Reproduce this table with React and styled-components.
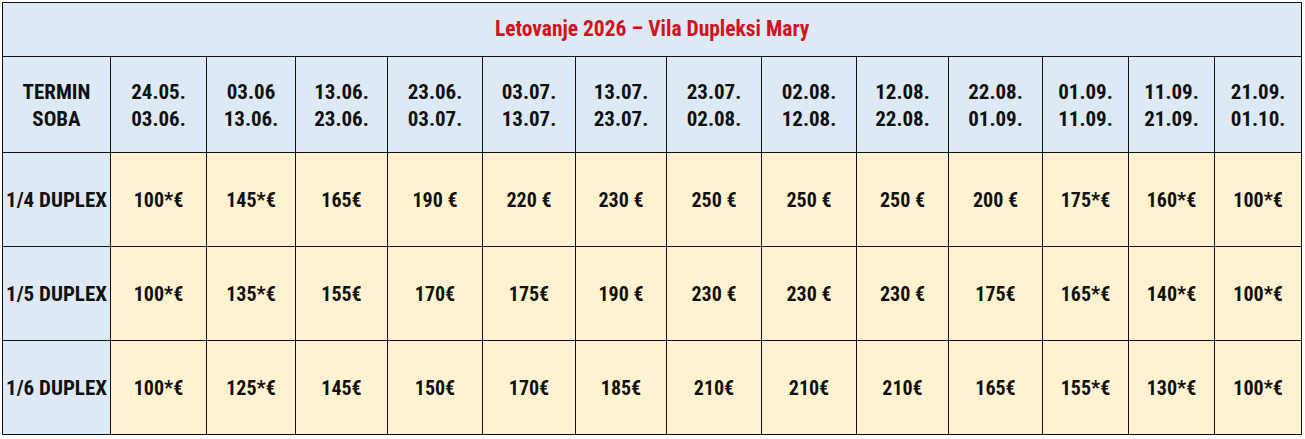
import styled, { createGlobalStyle } from 'styled-components';

const GlobalStyle = createGlobalStyle`
  html, body {
    margin: 0;
    padding: 0;
    background: #ffffff;
  }
  body {
    font-family: Roboto, "Open Sans", sans-serif;
    font-stretch: 75%;
  }
`;

const columns = [108, 96, 89, 92, 95, 93, 91, 95, 95, 92, 94, 86, 86, 87];

const terms = [
  ['24.05.', '03.06.'],
  ['03.06', '13.06.'],
  ['13.06.', '23.06.'],
  ['23.06.', '03.07.'],
  ['03.07.', '13.07.'],
  ['13.07.', '23.07.'],
  ['23.07.', '02.08.'],
  ['02.08.', '12.08.'],
  ['12.08.', '22.08.'],
  ['22.08.', '01.09.'],
  ['01.09.', '11.09.'],
  ['11.09.', '21.09.'],
  ['21.09.', '01.10.'],
];

const rooms = [
  {
    name: '1/4 DUPLEX',
    height: 94,
    prices: ['100*€', '145*€', '165€', '190 €', '220 €', '230 €', '250 €', '250 €', '250 €', '200 €', '175*€', '160*€', '100*€'],
  },
  {
    name: '1/5 DUPLEX',
    height: 94,
    prices: ['100*€', '135*€', '155€', '170€', '175€', '190 €', '230 €', '230 €', '230 €', '175€', '165*€', '140*€', '100*€'],
  },
  {
    name: '1/6 DUPLEX',
    height: 94,
    prices: ['100*€', '125*€', '145€', '150€', '170€', '185€', '210€', '210€', '210€', '165€', '155*€', '130*€', '100*€'],
  },
];

function App() {
  return (
    <Page>
      <GlobalStyle />
      <PriceTable>
        <colgroup>
          {columns.map((w, i) => (
            <col key={i} style={{ width: w }} />
          ))}
        </colgroup>
        <tbody>
          <TitleRow>
            <TitleCell colSpan={columns.length}>Letovanje 2026 – Vila Dupleksi Mary</TitleCell>
          </TitleRow>
          <HeaderRow>
            <HeadCell>
              TERMIN
              <br />
              SOBA
            </HeadCell>
            {terms.map(([from, to]) => (
              <HeadCell key={from + to}>
                {from}
                <br />
                {to}
              </HeadCell>
            ))}
          </HeaderRow>
          {rooms.map(room => (
            <PriceRow key={room.name} $height={room.height}>
              <RoomCell>{room.name}</RoomCell>
              {room.prices.map((p, i) => (
                <PriceCell key={i}>{p}</PriceCell>
              ))}
            </PriceRow>
          ))}
        </tbody>
      </PriceTable>
    </Page>
  );
}

export default App;

const Page = styled.div`
  padding: 2px;
`;

const PriceTable = styled.table`
  width: 1300px;
  table-layout: fixed;
  border-collapse: collapse;
  border: 1.5px solid #111;
  color: #111;
  font-weight: 700;
  font-size: 20px;
`;

// title
const TitleRow = styled.tr`
  height: 54px;
`;

const TitleCell = styled.td`
  background: #dde9f5;
  color: #d2131e;
  font-size: 21.5px;
  text-align: center;
  vertical-align: middle;
  border: 1.5px solid #111;
  padding: 0 0 2px;
`;

// header
const HeaderRow = styled.tr`
  height: 96px;
`;

const Cell = styled.td`
  border: 1.5px solid #111;
  padding: 0;
  text-align: center;
  vertical-align: middle;
  white-space: nowrap;
`;

const HeadCell = styled(Cell)`
  background: #dde9f5;
  font-size: 21px;
  line-height: 27px;
  padding-top: 3px;
`;

// prices
const PriceRow = styled.tr`
  height: ${props => props.$height}px;
`;

const RoomCell = styled(Cell)`
  background: #dde9f5;
  font-size: 21px;
`;

const PriceCell = styled(Cell)`
  background: #fff2d0;
`;
